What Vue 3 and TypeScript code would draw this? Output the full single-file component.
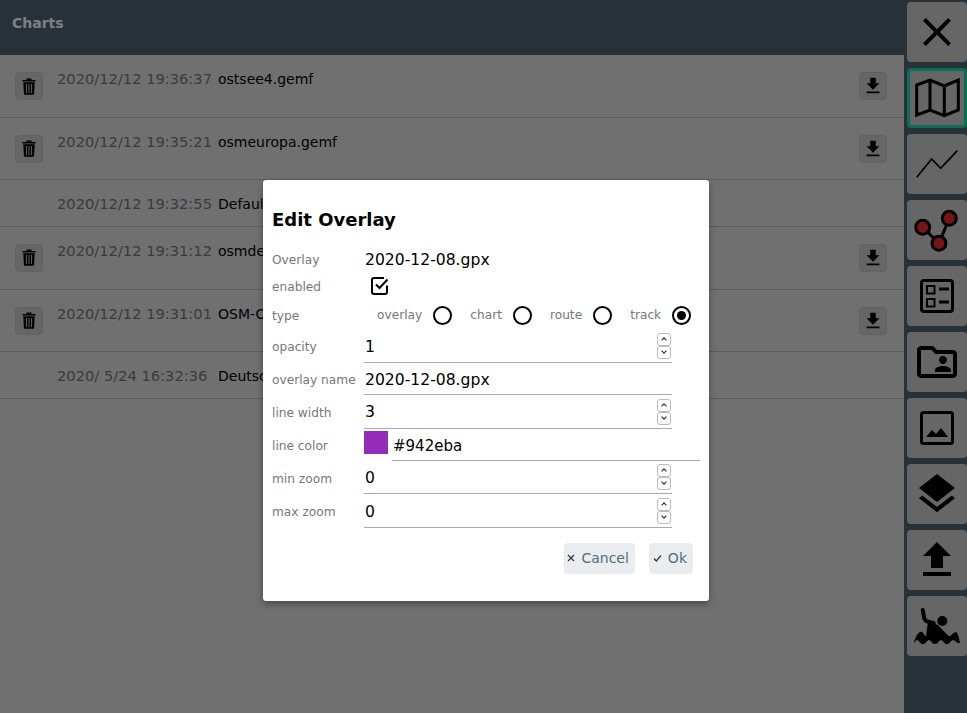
<script setup lang="ts">
interface Row { date: string; name: string; del: boolean; dl: boolean; short: boolean }
const rows: Row[] = [
  { date: '2020/12/12 19:36:37', name: 'ostsee4.gemf', del: true, dl: true, short: false },
  { date: '2020/12/12 19:35:21', name: 'osmeuropa.gemf', del: true, dl: true, short: false },
  { date: '2020/12/12 19:32:55', name: 'Defaul', del: false, dl: false, short: true },
  { date: '2020/12/12 19:31:12', name: 'osmde', del: true, dl: true, short: false },
  { date: '2020/12/12 19:31:01', name: 'OSM-O', del: true, dl: true, short: false },
  { date: '2020/ 5/24 16:32:36', name: 'Deutsc', del: false, dl: false, short: true },
]
const radios = [
  { label: 'overlay', on: false },
  { label: 'chart', on: false },
  { label: 'route', on: false },
  { label: 'track', on: true },
]
</script>

<template>
  <div class="page">
    <div class="main">
      <div class="header">Charts</div>
      <div class="list">
        <div v-for="r in rows" :key="r.date" class="row" :class="{ short: r.short }">
          <div class="slot">
            <div v-if="r.del" class="small-btn">
              <svg width="14" height="17" viewBox="0 0 14 17">
                <path d="M0.5 2h13v1.6H0.5zM4.5 0.5h5V2h-5z" />
                <path fill-rule="evenodd" d="M1.3 4.2h11.4l-.6 11.3c0 .8-.6 1.3-1.3 1.3H3.2c-.7 0-1.3-.5-1.3-1.3zM3.9 6v9h1V6zM6.5 6v9h1V6zM9.1 6v9h1V6z" />
              </svg>
            </div>
          </div>
          <span class="date">{{ r.date }}</span>
          <span class="name">{{ r.name }}</span>
          <div v-if="r.dl" class="small-btn dl">
            <svg width="22" height="22" viewBox="0 0 24 24"><path d="M19 9h-4V3H9v6H5l7 7 7-7zM5 18v2h14v-2H5z" /></svg>
          </div>
        </div>
      </div>
    </div>

    <div class="side">
      <div class="nav">
        <svg width="48" height="48" viewBox="0 0 24 24"><path d="M19 6.41L17.59 5 12 10.59 6.41 5 5 6.41 10.59 12 5 17.59 6.41 19 12 13.41 17.59 19 19 17.59 13.41 12z" /></svg>
      </div>
      <div class="nav active">
        <svg width="60" height="60" viewBox="0 0 60 60">
          <path class="st3" d="M9.7 17L23 12l14.3 6 14-6v30l-14 5.7L23 42 9.7 47zM23 12v30M37.3 18v29.7" />
        </svg>
      </div>
      <div class="nav">
        <svg width="60" height="60" viewBox="0 0 60 60">
          <path class="st17" d="M9.7 43.3L24.7 25l9 9.3 16.6-17.6" />
        </svg>
      </div>
      <div class="nav">
        <svg width="60" height="60" viewBox="0 0 60 60">
          <path class="st3" d="M15.7 27.3L32 43.3 42.3 18.3" />
          <circle class="node" cx="15.7" cy="27.3" r="7" />
          <circle class="node" cx="42.3" cy="18.3" r="7" />
          <circle class="node" cx="32" cy="43.3" r="7" />
        </svg>
      </div>
      <div class="nav">
        <svg width="60" height="60" viewBox="0 0 60 60">
          <rect class="st3" x="14.5" y="14.5" width="31" height="31" rx="2.5" />
          <rect class="st2" x="20" y="20" width="7.5" height="7.5" />
          <rect class="st2" x="20" y="33" width="7.5" height="7.5" />
          <path class="st3" d="M32 23h10M32 36h10" />
        </svg>
      </div>
      <div class="nav">
        <svg width="48" height="48" viewBox="0 0 24 24"><path d="M20 6h-8l-2-2H4c-1.1 0-2 .9-2 2v12c0 1.1.9 2 2 2h16c1.1 0 2-.9 2-2V8c0-1.1-.9-2-2-2zm0 12H4V6h5.17l2 2H20v10zm-5-5c1.1 0 2-.9 2-2s-.9-2-2-2-2 .9-2 2 .9 2 2 2zm-4 4h8v-1c0-1.33-2.67-2-4-2s-4 .67-4 2v1z" /></svg>
      </div>
      <div class="nav">
        <svg width="60" height="60" viewBox="0 0 60 60">
          <rect class="st3" x="14.5" y="14.5" width="31" height="31" rx="2" />
          <path d="M19 39l6-7 4 4 5-6 7 9z" />
        </svg>
      </div>
      <div class="nav">
        <svg width="48" height="48" viewBox="0 0 24 24"><path d="M11.99 18.54l-7.37-5.73L3 14.07l9 7 9-7-1.63-1.27-7.38 5.74zM12 16l7.36-5.73L21 9l-9-7-9 7 1.63 1.27L12 16z" /></svg>
      </div>
      <div class="nav">
        <svg width="48" height="48" viewBox="0 0 24 24"><path d="M9 16h6v-6h4l-7-7-7 7h4zm-4 2h14v2H5z" /></svg>
      </div>
      <div class="nav">
        <svg width="60" height="60" viewBox="0 0 60 60">
          <circle cx="35.3" cy="25" r="5" />
          <path class="st4" d="M15.7 14l1.5 8c.5 2.5 2 3.5 4.5 4l5 1" />
          <path d="M7 46C9 40 12 35 15 36C17 37 17 40 19 40L21 26L31 29C35 33 39 38 42 40C44 41 46 36 49 36C51 37 52 42 53 47C50 48 48 44 46 44C44 44 43 48 40 48C37 48 36 44 34 44C32 44 31 48 28 48C25 48 24 44 22 44C20 44 19 48 16 48C13 48 12 44 10 44C9 44 8 46 7 47Z" />
        </svg>
      </div>
    </div>

    <div class="scrim">
      <div class="dialog">
        <h3 class="title">Edit Overlay</h3>
        <div class="frow r-overlay"><span class="lab">Overlay</span><span class="val">2020-12-08.gpx</span></div>
        <div class="frow r-enabled">
          <span class="lab">enabled</span>
          <svg class="check" width="18" height="18" viewBox="0 0 18 18">
            <path d="M16 8.5V15a2 2 0 0 1-2 2H3a2 2 0 0 1-2-2V3a2 2 0 0 1 2-2h10" />
            <path d="M5 7.5l3.5 3.5L16.5 2.5" />
          </svg>
        </div>
        <div class="frow r-type low">
          <span class="lab">type</span>
          <div class="radios">
            <div v-for="o in radios" :key="o.label" class="radio-item">
              <span class="radio-lab">{{ o.label }}</span>
              <span class="radio" :class="{ on: o.on }"></span>
            </div>
          </div>
        </div>
        <div class="frow h33 lowval">
          <span class="lab">opacity</span>
          <div class="input num"><span class="val">1</span><div class="spin"><span class="sp up"></span><span class="sp down"></span></div></div>
        </div>
        <div class="frow h32 low lowval">
          <span class="lab">overlay name</span>
          <div class="input"><span class="val">2020-12-08.gpx</span></div>
        </div>
        <div class="frow h34 low">
          <span class="lab">line width</span>
          <div class="input num"><span class="val">3</span><div class="spin"><span class="sp up"></span><span class="sp down"></span></div></div>
        </div>
        <div class="frow h32 r-color low lowval">
          <span class="lab">line color</span>
          <span class="swatch"></span>
          <div class="input"><span class="val hex">#942eba</span></div>
        </div>
        <div class="frow h33 low lowval">
          <span class="lab">min zoom</span>
          <div class="input num"><span class="val">0</span><div class="spin"><span class="sp up"></span><span class="sp down"></span></div></div>
        </div>
        <div class="frow h34 low lowval">
          <span class="lab">max zoom</span>
          <div class="input num"><span class="val">0</span><div class="spin"><span class="sp up"></span><span class="sp down"></span></div></div>
        </div>
        <div class="actions">
          <button class="btn cancel">
            <svg width="8" height="8" viewBox="0 0 8 8"><path d="M1 1l6 6M7 1L1 7" /></svg>
            <span>Cancel</span>
          </button>
          <button class="btn">
            <svg width="9" height="8" viewBox="0 0 9 8"><path d="M1 4.5L3.3 7 8 1.5" /></svg>
            <span>Ok</span>
          </button>
        </div>
      </div>
    </div>
  </div>
</template>

<style>
html, body { margin: 0; padding: 0; }
</style>

<style scoped>
.page {
  position: relative;
  display: flex;
  width: 967px;
  height: 713px;
  overflow: hidden;
  font-family: "DejaVu Sans", sans-serif;
  background: #4c6470;
}
.main { width: 904px; display: flex; flex-direction: column; background: #e0e0e0; }
.header {
  height: 55px;
  box-sizing: border-box;
  padding: 15px 12px;
  background: #4c6470;
  color: #fff;
  font-size: 14px;
  font-weight: bold;
  line-height: 17px;
}
.list { display: flex; flex-direction: column; }
.row {
  height: 62.6px;
  box-sizing: border-box;
  display: flex;
  align-items: flex-start;
  padding: 15px 17px 0 15px;
  border-bottom: 1px solid #bbb;
  line-height: 18px;
}
.row.short { height: 46.8px; }
.slot { width: 42px; height: 28px; flex: none; }
.small-btn {
  width: 28px;
  height: 28px;
  margin-top: 2px;
  box-sizing: border-box;
  border-radius: 4px;
  background: #ccc;
  border: 1px solid #c4c4c4;
  display: flex;
  align-items: center;
  justify-content: center;
}
.small-btn svg { fill: #000; display: block; }
.small-btn.dl { margin-left: auto; }
.date { color: #777; font-size: 14.67px; width: 161px; flex: none; white-space: pre; }
.name { color: #000; font-size: 14px; white-space: nowrap; }

.side {
  width: 63px;
  box-sizing: border-box;
  padding: 2px 0 0 3px;
  display: flex;
  flex-direction: column;
  gap: 6px;
  background: #4c6470;
}
.nav {
  width: 60px;
  height: 60px;
  box-sizing: border-box;
  border-radius: 4px;
  background: #ccc;
  display: flex;
  align-items: center;
  justify-content: center;
}
.nav.active { border: 3px solid #1bdcb0; }
.nav svg { display: block; fill: #000; flex: none; }
.st17 { fill: none; stroke: #000; stroke-width: 1.7; }
.st2 { fill: none; stroke: #000; stroke-width: 2; }
.st3 { fill: none; stroke: #000; stroke-width: 3; }
.st4 { fill: none; stroke: #000; stroke-width: 4; stroke-linecap: round; }
.node { fill: #f02828; stroke: #000; stroke-width: 3; }

.scrim {
  position: absolute;
  inset: 0;
  background: rgba(0, 0, 0, 0.5);
  box-sizing: border-box;
  padding: 180px 0 0 263px;
}
.dialog {
  width: 446px;
  height: 421px;
  box-sizing: border-box;
  padding: 29px 9px 0;
  background: #fff;
  border-radius: 3px;
  box-shadow: 0 3px 6px rgba(0, 0, 0, 0.35);
}
.title { margin: 0 0 15px; font-size: 18px; font-weight: bold; line-height: 22px; color: #000; }
.frow { display: flex; align-items: center; }
.lab { width: 92px; flex: none; font-size: 12.2px; color: #777; white-space: nowrap; }
.low .lab { padding-top: 2px; }
.val { font-size: 15.6px; color: #000; padding-left: 1px; white-space: nowrap; }
.val.hex { font-size: 15px; }
.lowval .val { padding-top: 2px; }
.r-overlay { height: 27px; }
.r-enabled { height: 27px; }
.r-type { height: 30px; }
.h32 { height: 32px; }
.h33 { height: 33px; }
.h34 { height: 34px; }
.check { margin-left: 7px; margin-top: -2px; display: block; fill: none; stroke: #000; stroke-width: 2; }
.radios { display: flex; padding-left: 13px; gap: 18px; }
.radio-item { display: flex; align-items: center; gap: 11px; }
.radio-lab { font-size: 12.2px; color: #777; }
.radio {
  width: 19px;
  height: 19px;
  box-sizing: border-box;
  border: 2px solid #000;
  border-radius: 50%;
  position: relative;
}
.radio.on::after {
  content: "";
  position: absolute;
  inset: 3px;
  border-radius: 50%;
  background: #000;
}
.input {
  width: 308px;
  height: 100%;
  box-sizing: border-box;
  border-bottom: 1px solid #aaa;
  display: flex;
  align-items: center;
  justify-content: space-between;
}
.swatch { width: 24px; height: 23px; background: #942eba; margin: 0 4px 5px 0; flex: none; }
.spin { display: flex; flex-direction: column; margin-right: 1px; }
.sp {
  width: 14px;
  height: 13px;
  box-sizing: border-box;
  border: 1px solid #bbb;
  border-radius: 3px;
  position: relative;
}
.sp::after {
  content: "";
  position: absolute;
  left: 4px;
  width: 3px;
  height: 3px;
  border-left: 1.5px solid #222;
  border-top: 1.5px solid #222;
}
.sp.up::after { top: 4px; transform: rotate(45deg); }
.sp.down::after { top: 2px; transform: rotate(225deg); }
.actions { display: flex; justify-content: flex-end; gap: 14px; margin-top: 15px; padding-right: 7px; }
.btn {
  height: 31px;
  box-sizing: border-box;
  display: flex;
  align-items: center;
  gap: 6px;
  padding: 0 6px 1px 4px;
  border: none;
  border-radius: 4px;
  background: #e9edf0;
  color: #546e7a;
  font-family: inherit;
  font-size: 14px;
}
.btn.cancel { padding-left: 3px; }
.btn svg { fill: none; stroke: #333; stroke-width: 1.2; display: block; }
</style>
